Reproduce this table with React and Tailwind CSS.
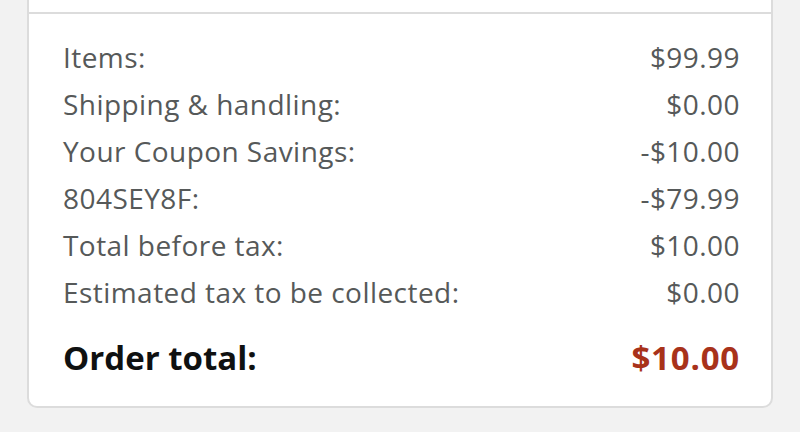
import React from 'react';

const ROWS = [
  ['Items:', '$99.99'],
  ['Shipping & handling:', '$0.00'],
  ['Your Coupon Savings:', '-$10.00'],
  ['804SEY8F:', '-$79.99'],
  ['Total before tax:', '$10.00'],
  ['Estimated tax to be collected:', '$0.00'],
];

const App = () => {
  return (
    <div className="w-[800px] h-[432px] bg-[#f2f2f2] px-[27px] overflow-hidden" style={{ fontFamily: '"Open Sans", "Noto Sans", sans-serif' }}>
      {/* bottom of the card above */}
      <div className="h-[12px] bg-white border-x-2 border-[#dcdcdc]" />
      {/* order summary */}
      <div className="bg-white border-2 border-[#dcdcdc] rounded-b-[10px] pl-[34px] pr-[31px] pt-[20px] pb-[25px]">
        {ROWS.map(([label, value]) => (
          <div key={label} className="flex justify-between text-[28px] leading-[47px] tracking-[0.45px] text-[#565959]">
            <span>{label}</span>
            <span>{value}</span>
          </div>
        ))}
        <div className="flex justify-between mt-[18px] text-[33px] leading-[47px] font-bold">
          <span className="text-[#0f1111]">Order total:</span>
          <span className="text-[#a8321a] tracking-[0.8px]">$10.00</span>
        </div>
      </div>
    </div>
  );
};

export default App;
